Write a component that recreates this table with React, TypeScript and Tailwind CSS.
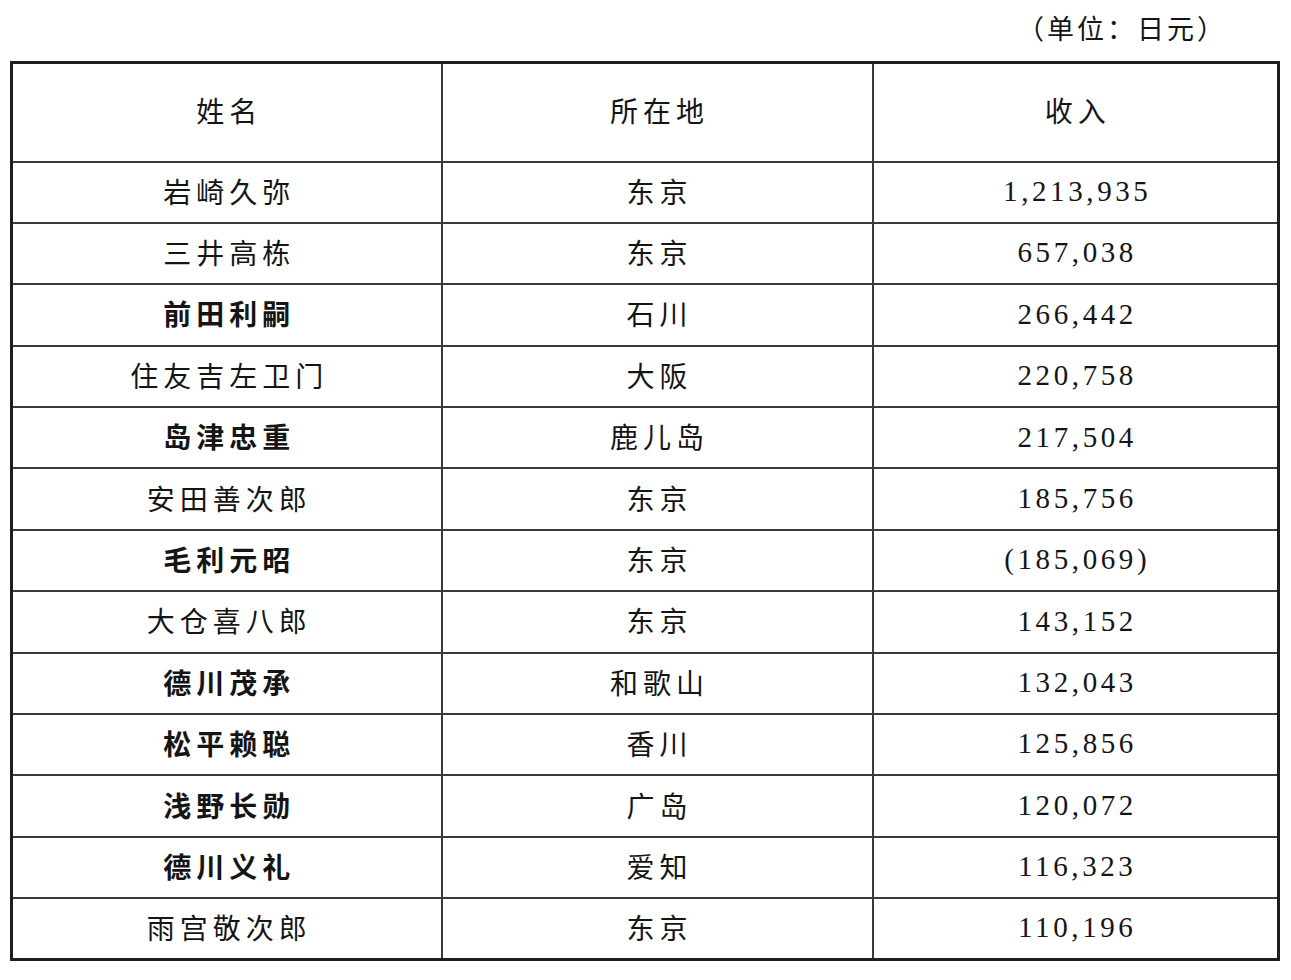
const rows: { name: string; place: string; income: string; bold?: boolean }[] = [
  { name: "岩崎久弥", place: "东京", income: "1,213,935" },
  { name: "三井高栋", place: "东京", income: "657,038" },
  { name: "前田利嗣", place: "石川", income: "266,442", bold: true },
  { name: "住友吉左卫门", place: "大阪", income: "220,758" },
  { name: "岛津忠重", place: "鹿儿岛", income: "217,504", bold: true },
  { name: "安田善次郎", place: "东京", income: "185,756" },
  { name: "毛利元昭", place: "东京", income: "(185,069)", bold: true },
  { name: "大仓喜八郎", place: "东京", income: "143,152" },
  { name: "德川茂承", place: "和歌山", income: "132,043", bold: true },
  { name: "松平赖聪", place: "香川", income: "125,856", bold: true },
  { name: "浅野长勋", place: "广岛", income: "120,072", bold: true },
  { name: "德川义礼", place: "爱知", income: "116,323", bold: true },
  { name: "雨宫敬次郎", place: "东京", income: "110,196" },
];

const cjk = "font-['Noto_Sans_CJK_SC',sans-serif]";
const num = "font-['Liberation_Serif','Noto_Sans_CJK_SC',serif] text-[29px] tracking-[3.6px]";

export default function App() {
  return (
    <div className="w-[1291px] h-[980px] bg-white text-[#151515]">
      <div className={`h-[61px] flex items-center justify-end pr-[64px] pb-[5px] text-[27px] tracking-[3px] ${cjk}`}>
        （单位：日元）
      </div>
      <div className="ml-[10px] w-[1270px]">
        <table className="w-full table-fixed border-collapse border-[3px] border-[#1e1e1e]">
          <colgroup>
            <col className="w-[430px]" />
            <col className="w-[431px]" />
            <col />
          </colgroup>
          <thead>
            <tr className="h-[99px]">
              <th className={`border-2 border-[#3a3a3a] font-normal text-[28px] tracking-[5px] pl-[5px] pb-[4px] ${cjk}`}>姓名</th>
              <th className={`border-2 border-[#3a3a3a] font-normal text-[28px] tracking-[5px] pl-[5px] pb-[4px] ${cjk}`}>所在地</th>
              <th className={`border-2 border-[#3a3a3a] font-normal text-[28px] tracking-[5px] pl-[5px] pb-[4px] ${cjk}`}>收入</th>
            </tr>
          </thead>
          <tbody>
            {rows.map((r) => (
              <tr key={r.name} className="h-[61.4px]">
                <td
                  className={`border-2 border-[#3a3a3a] text-center text-[28px] tracking-[5px] pl-[5px] pb-[3px] ${cjk} ${
                    r.bold ? "font-bold" : "font-normal"
                  }`}
                >
                  {r.name}
                </td>
                <td className={`border-2 border-[#3a3a3a] text-center text-[28px] tracking-[5px] pl-[5px] pb-[3px] ${cjk}`}>
                  {r.place}
                </td>
                <td className={`border-2 border-[#3a3a3a] text-center pl-[4px] pb-[1px] ${num}`}>{r.income}</td>
              </tr>
            ))}
          </tbody>
        </table>
      </div>
    </div>
  );
}
